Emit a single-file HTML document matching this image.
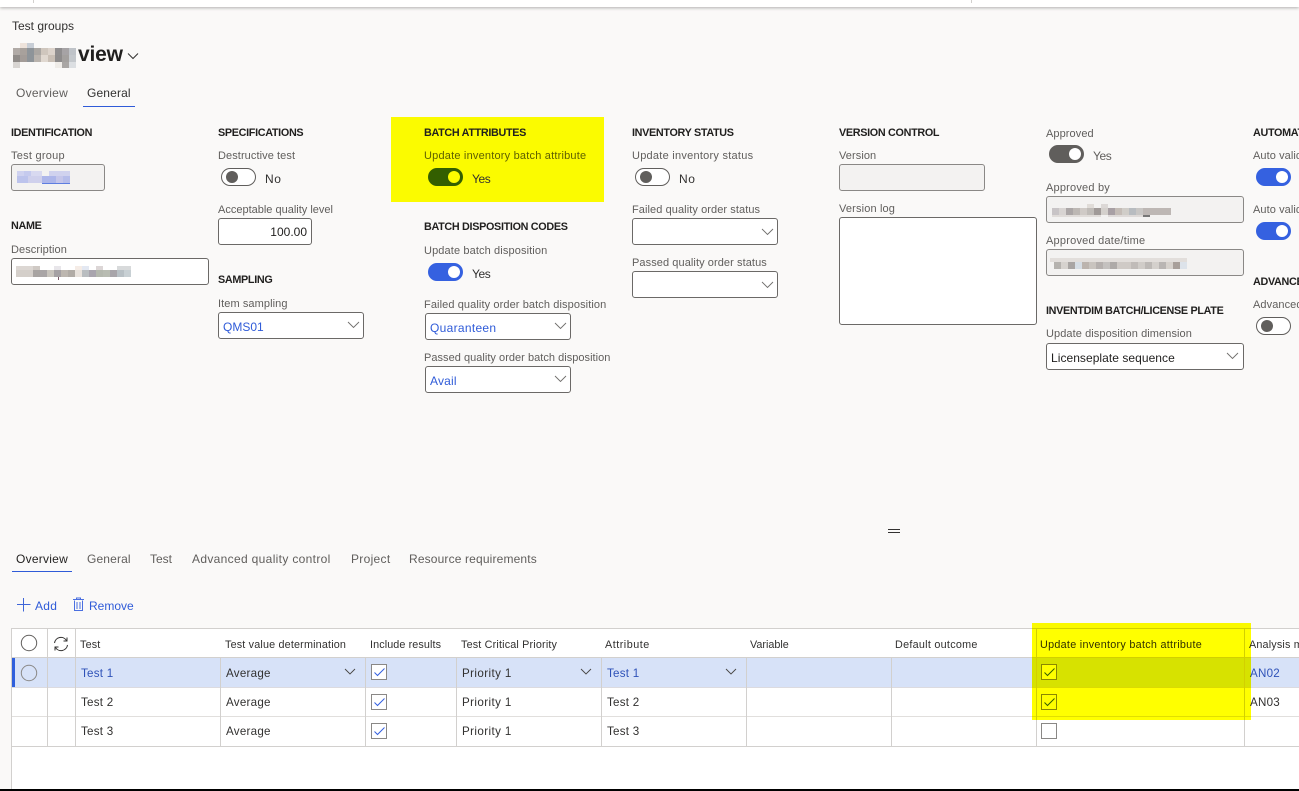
<!DOCTYPE html>
<html><head><meta charset="utf-8"><title>Test groups</title>
<style>
html,body{margin:0;padding:0;background:#faf9f8}
#p{position:relative;width:1299px;height:791px;overflow:hidden;background:#faf9f8;font-family:"Liberation Sans",sans-serif;font-size:12px;color:#323130}
#p div,#p svg{position:absolute}
.t{white-space:nowrap;line-height:16px;height:16px}
.h{font-weight:bold;font-size:10.8px;color:#201f1e;letter-spacing:-.32px;margin-top:1px}
.l{color:#605e5c;font-size:11px;letter-spacing:.08px;margin-top:1px}
.v{font-size:12px;color:#323130}
.b{color:#2f5bd8}
.f{box-sizing:border-box;background:#fff;border:1px solid #6b6967;border-radius:3px}
.g{background:#f3f2f1;border-color:#8a8886}
.tg{box-sizing:border-box;width:35px;height:18px;border-radius:9px;background:#fff;border:1px solid #605e5c}
.tg i{position:absolute;display:block;width:12px;height:12px;border-radius:50%;background:#605e5c;left:4px;top:2px}
.on{background:#3561e0;border-color:#3561e0}
.on i{background:#fff;left:19px}
.ln{background:#d2d0ce}
.cb{box-sizing:border-box;width:16px;height:16px;border:1px solid #8a8886;background:#fff}
.th{font-size:10.8px;color:#323130;letter-spacing:.17px;margin-top:1px}
.td{font-size:11.6px;color:#323130;letter-spacing:.25px}
</style></head><body><div id="p">

<!-- top bar -->
<div style="left:0;top:0;width:1299px;height:7px;background:#fff;box-shadow:0 1px 3px rgba(0,0,0,.3)"></div>
<div style="left:33px;top:0;width:1px;height:3px;background:#d2d0ce"></div>
<div style="left:971px;top:0;width:1px;height:3px;background:#d2d0ce"></div>

<div class="t" style="left:12px;top:18px;font-size:12px;color:#323130">Test groups</div>
<!-- pixelated title -->
<svg style="left:13px;top:43px" width="63" height="25" viewBox="0 0 63 25" shape-rendering="crispEdges">
<rect x="7" y="0" width="7" height="5" fill="#eee3db"/><rect x="14" y="0" width="7" height="5" fill="#c8ced6"/>
<rect x="0" y="5" width="7" height="7" fill="#b0aaa6"/><rect x="7" y="5" width="7" height="7" fill="#a8a19c"/><rect x="14" y="5" width="7" height="7" fill="#8e9499"/><rect x="21" y="5" width="7" height="7" fill="#aaa6a2"/><rect x="28" y="5" width="7" height="7" fill="#cfc6bd"/><rect x="35" y="5" width="7" height="7" fill="#dcd3cb"/><rect x="42" y="5" width="7" height="7" fill="#8f8d8e"/><rect x="49" y="5" width="7" height="7" fill="#a6a3a5"/><rect x="56" y="5" width="7" height="7" fill="#bfc3c8"/>
<rect x="0" y="12" width="7" height="7" fill="#8f8b88"/><rect x="7" y="12" width="7" height="7" fill="#a39c98"/><rect x="14" y="12" width="7" height="7" fill="#8e9499"/><rect x="21" y="12" width="7" height="7" fill="#b9b3ad"/><rect x="28" y="12" width="7" height="7" fill="#e0d8d0"/><rect x="35" y="12" width="7" height="7" fill="#c9bfb5"/><rect x="42" y="12" width="7" height="7" fill="#8e8c8c"/><rect x="49" y="12" width="7" height="7" fill="#a3a09e"/><rect x="56" y="12" width="7" height="7" fill="#c4c8cc"/>
<rect x="0" y="19" width="7" height="6" fill="#d8d5d2"/><rect x="42" y="19" width="7" height="6" fill="#efece8"/><rect x="49" y="19" width="7" height="6" fill="#a9a6a4"/><rect x="56" y="19" width="7" height="6" fill="#dcdfe2"/>
</svg>
<div class="t" style="left:78px;top:42px;height:26px;line-height:26px;font-size:21px;font-weight:bold;color:#201f1e;letter-spacing:-.2px">view</div>
<svg style="left:127px;top:52px" width="12" height="8" viewBox="0 0 12 8"><path d="M1 1.500 6 6.500 11 1.500" fill="none" stroke="#323130" stroke-width="1"/></svg>

<!-- top tabs -->
<div class="t" style="left:16px;top:85px;color:#605e5c;font-size:12px;letter-spacing:.25px">Overview</div>
<div class="t" style="left:87px;top:85px;color:#323130;font-size:12px;letter-spacing:.15px">General</div>
<div style="left:83px;top:106px;width:52px;height:1px;background:#2f5bd8"></div>

<!-- yellow highlight -->
<div style="left:391px;top:117px;width:213px;height:85px;background:#fbfb00"></div>

<!-- Identification -->
<div class="t h" style="left:11px;top:124px">IDENTIFICATION</div>
<div class="t l" style="left:11px;top:147px;letter-spacing:.25px">Test group</div>
<div class="f g" style="left:11px;top:164px;width:94px;height:27px"></div>
<svg style="left:17px;top:171px" width="54" height="13" viewBox="0 0 54 13" shape-rendering="crispEdges">
<rect x="0" y="0" width="7" height="5" fill="#cfd2f0"/><rect x="7" y="0" width="7" height="5" fill="#c5caee"/><rect x="14" y="0" width="11" height="5" fill="#d8d9f0"/><rect x="32" y="0" width="21" height="5" fill="#d0d2ee"/>
<rect x="0" y="5" width="11" height="7" fill="#bcc3ec"/><rect x="11" y="5" width="14" height="7" fill="#cfd0ec"/><rect x="25" y="5" width="14" height="7" fill="#adb6ea"/><rect x="39" y="5" width="7" height="7" fill="#c5c6ea"/><rect x="46" y="5" width="7" height="7" fill="#b6bdea"/>
<rect x="25" y="12" width="28" height="1" fill="#5e7ee0"/>
</svg>

<div class="t h" style="left:11px;top:217px">NAME</div>
<div class="t l" style="left:11px;top:241px">Description</div>
<div class="f" style="left:11px;top:258px;width:198px;height:27px"></div>
<svg style="left:16px;top:266px" width="116" height="14" viewBox="0 0 116 14" shape-rendering="crispEdges">
<rect x="0" y="0" width="17" height="4" fill="#dcd7d3"/><rect x="17" y="0" width="7" height="4" fill="#cfc9c4"/><rect x="38" y="0" width="7" height="4" fill="#e8e6ea"/><rect x="59" y="0" width="7" height="4" fill="#f5ece6"/><rect x="66" y="0" width="7" height="4" fill="#e3e8f2"/><rect x="80" y="0" width="7" height="4" fill="#dcd6d6"/><rect x="101" y="0" width="14" height="4" fill="#d8dadb"/>
<rect x="0" y="4" width="17" height="7" fill="#d4cfca"/><rect x="17" y="4" width="7" height="7" fill="#a8a4a2"/><rect x="24" y="4" width="7" height="7" fill="#a9a5a6"/><rect x="31" y="4" width="7" height="7" fill="#c8c4bd"/><rect x="38" y="4" width="7" height="7" fill="#a5a1a4"/><rect x="45" y="4" width="7" height="7" fill="#bdb7b0"/><rect x="52" y="4" width="7" height="7" fill="#b1aca6"/><rect x="59" y="4" width="7" height="7" fill="#e8e2dc"/><rect x="66" y="4" width="7" height="7" fill="#b9bdc0"/><rect x="73" y="4" width="7" height="7" fill="#a9a5ae"/><rect x="80" y="4" width="7" height="7" fill="#b4b8ae"/><rect x="87" y="4" width="7" height="7" fill="#b8bcb2"/><rect x="94" y="4" width="7" height="7" fill="#a8a5aa"/><rect x="101" y="4" width="7" height="7" fill="#b8c0c5"/><rect x="108" y="4" width="7" height="7" fill="#c8d0d4"/>
<rect x="42" y="11" width="1" height="3" fill="#7a5a6a"/>
</svg>

<!-- Specifications -->
<div class="t h" style="left:218px;top:124px">SPECIFICATIONS</div>
<div class="t l" style="left:218px;top:147px">Destructive test</div>
<div class="tg" style="left:221px;top:168px"><i></i></div>
<div class="t v" style="left:265px;top:171px;letter-spacing:.6px">No</div>
<div class="t l" style="left:218px;top:201px;letter-spacing:0">Acceptable quality level</div>
<div class="f" style="left:218px;top:218px;width:94px;height:27px"></div>
<div class="t v" style="left:218px;top:224px;width:89px;text-align:right;color:#201f1e">100.00</div>
<div class="t h" style="left:218px;top:271px">SAMPLING</div>
<div class="t l" style="left:218px;top:295px">Item sampling</div>
<div class="f" style="left:218px;top:312px;width:146px;height:27px"></div>
<div class="t v b" style="left:223px;top:319px">QMS01</div>
<svg style="left:347px;top:321px" width="13" height="8" viewBox="0 0 13 8"><path d="M1 1 6.500 6.500 12 1" fill="none" stroke="#706e6c" stroke-width=".9"/></svg>

<!-- Batch -->
<div class="t h" style="left:424px;top:124px">BATCH ATTRIBUTES</div>
<div class="t l" style="left:424px;top:147px;color:#5f6000;letter-spacing:.2px">Update inventory batch attribute</div>
<div class="tg" style="left:428px;top:168px;background:#335f00;border-color:#335f00"><i style="background:#fbfb00;left:19px"></i></div>
<div class="t v" style="left:472px;top:171px;letter-spacing:-.4px">Yes</div>
<div class="t h" style="left:424px;top:218px">BATCH DISPOSITION CODES</div>
<div class="t l" style="left:424px;top:242px;letter-spacing:.12px">Update batch disposition</div>
<div class="tg on" style="left:428px;top:263px"><i></i></div>
<div class="t v" style="left:472px;top:266px;letter-spacing:-.4px">Yes</div>
<div class="t l" style="left:424px;top:296px;letter-spacing:.1px">Failed quality order batch disposition</div>
<div class="f" style="left:425px;top:313px;width:146px;height:27px"></div>
<div class="t v b" style="left:430px;top:320px;letter-spacing:.3px">Quaranteen</div>
<svg style="left:554px;top:322px" width="13" height="8" viewBox="0 0 13 8"><path d="M1 1 6.500 6.500 12 1" fill="none" stroke="#706e6c" stroke-width=".9"/></svg>
<div class="t l" style="left:424px;top:349px;letter-spacing:.03px">Passed quality order batch disposition</div>
<div class="f" style="left:425px;top:366px;width:146px;height:27px"></div>
<div class="t v b" style="left:430px;top:373px;letter-spacing:.2px">Avail</div>
<svg style="left:554px;top:375px" width="13" height="8" viewBox="0 0 13 8"><path d="M1 1 6.500 6.500 12 1" fill="none" stroke="#706e6c" stroke-width=".9"/></svg>

<!-- Inventory -->
<div class="t h" style="left:632px;top:124px">INVENTORY STATUS</div>
<div class="t l" style="left:632px;top:147px;letter-spacing:.25px">Update inventory status</div>
<div class="tg" style="left:635px;top:168px"><i></i></div>
<div class="t v" style="left:679px;top:171px;letter-spacing:.6px">No</div>
<div class="t l" style="left:632px;top:201px">Failed quality order status</div>
<div class="f" style="left:632px;top:218px;width:146px;height:27px"></div>
<svg style="left:761px;top:228px" width="13" height="8" viewBox="0 0 13 8"><path d="M1 1 6.500 6.500 12 1" fill="none" stroke="#706e6c" stroke-width=".9"/></svg>
<div class="t l" style="left:632px;top:254px">Passed quality order status</div>
<div class="f" style="left:632px;top:271px;width:146px;height:27px"></div>
<svg style="left:761px;top:281px" width="13" height="8" viewBox="0 0 13 8"><path d="M1 1 6.500 6.500 12 1" fill="none" stroke="#706e6c" stroke-width=".9"/></svg>

<!-- Version -->
<div class="t h" style="left:839px;top:124px">VERSION CONTROL</div>
<div class="t l" style="left:839px;top:147px">Version</div>
<div class="f g" style="left:839px;top:164px;width:146px;height:27px"></div>
<div class="t l" style="left:839px;top:200px;letter-spacing:.15px">Version log</div>
<div class="f" style="left:839px;top:217px;width:198px;height:108px"></div>

<!-- Approved -->
<div class="t l" style="left:1046px;top:125px">Approved</div>
<div class="tg on" style="left:1049px;top:145px;background:#605e5c;border-color:#605e5c"><i></i></div>
<div class="t v" style="left:1093px;top:148px;color:#605e5c;letter-spacing:-.4px">Yes</div>
<div class="t l" style="left:1046px;top:179px;letter-spacing:.2px">Approved by</div>
<div class="f g" style="left:1046px;top:196px;width:198px;height:27px"></div>
<svg style="left:1052px;top:202px" width="120" height="16" viewBox="0 0 120 16" shape-rendering="crispEdges">
<rect x="35" y="2" width="7" height="4" fill="#e0dcd8"/><rect x="49" y="2" width="7" height="4" fill="#dcd8d6"/>
<rect x="0" y="6" width="7" height="7" fill="#c8c4c6"/><rect x="7" y="6" width="7" height="7" fill="#d8d4d2"/><rect x="14" y="6" width="7" height="7" fill="#aba6a6"/><rect x="21" y="6" width="7" height="7" fill="#bdb8b4"/><rect x="28" y="6" width="7" height="7" fill="#cfcac6"/><rect x="35" y="6" width="7" height="7" fill="#c0bcb8"/><rect x="42" y="6" width="7" height="7" fill="#a09a98"/><rect x="49" y="6" width="7" height="7" fill="#d4d0cc"/><rect x="56" y="6" width="7" height="7" fill="#a8a0a4"/><rect x="63" y="6" width="7" height="7" fill="#c4bcb6"/><rect x="70" y="6" width="7" height="7" fill="#d0cdc8"/><rect x="77" y="6" width="7" height="7" fill="#b8bcc0"/><rect x="84" y="6" width="7" height="7" fill="#c8c6c4"/><rect x="91" y="6" width="28" height="7" fill="#bdb7b4"/>
<rect x="0" y="13" width="49" height="2" fill="#e0dcd9"/><rect x="56" y="13" width="35" height="2" fill="#dedad8"/>
<rect x="91" y="13" width="7" height="2" fill="#777"/>
</svg>
<div class="t l" style="left:1046px;top:232px;letter-spacing:.22px">Approved date/time</div>
<div class="f g" style="left:1046px;top:249px;width:198px;height:27px"></div>
<svg style="left:1050px;top:258px" width="138" height="11" viewBox="0 0 138 11" shape-rendering="crispEdges">
<rect x="0" y="0" width="137" height="4" fill="#e2dedb"/>
<rect x="4" y="4" width="7" height="7" fill="#b5b2ae"/><rect x="11" y="4" width="7" height="7" fill="#d6d2ce"/><rect x="18" y="4" width="7" height="7" fill="#a9a5a3"/><rect x="25" y="4" width="7" height="7" fill="#d6dde4"/><rect x="32" y="4" width="7" height="7" fill="#bcb4ae"/><rect x="39" y="4" width="7" height="7" fill="#c9c4bf"/><rect x="46" y="4" width="7" height="7" fill="#b5b0ae"/><rect x="53" y="4" width="7" height="7" fill="#c4c1bf"/><rect x="60" y="4" width="7" height="7" fill="#aeaaa8"/><rect x="67" y="4" width="14" height="7" fill="#cfcac6"/><rect x="81" y="4" width="7" height="7" fill="#c0bbb8"/><rect x="88" y="4" width="7" height="7" fill="#d0ccc8"/><rect x="95" y="4" width="7" height="7" fill="#bdb9b6"/><rect x="102" y="4" width="7" height="7" fill="#d4d0cc"/><rect x="109" y="4" width="7" height="7" fill="#b9b5b3"/><rect x="116" y="4" width="7" height="7" fill="#d6d1cc"/><rect x="123" y="4" width="7" height="7" fill="#a89f9a"/><rect x="130" y="4" width="7" height="7" fill="#dde3ea"/>
</svg>
<div class="t h" style="left:1046px;top:302px">INVENTDIM BATCH/LICENSE PLATE</div>
<div class="t l" style="left:1046px;top:325px">Update disposition dimension</div>
<div class="f" style="left:1046px;top:343px;width:198px;height:27px"></div>
<div class="t v" style="left:1051px;top:350px;color:#201f1e;letter-spacing:.05px">Licenseplate sequence</div>
<svg style="left:1226px;top:352px" width="13" height="8" viewBox="0 0 13 8"><path d="M1 1 6.500 6.500 12 1" fill="none" stroke="#706e6c" stroke-width=".9"/></svg>

<!-- Automation -->
<div class="t h" style="left:1253px;top:124px">AUTOMATION</div>
<div class="t l" style="left:1253px;top:147px">Auto validate</div>
<div class="tg on" style="left:1256px;top:168px"><i></i></div>
<div class="t l" style="left:1253px;top:201px">Auto validate</div>
<div class="tg on" style="left:1256px;top:222px"><i></i></div>
<div class="t h" style="left:1253px;top:273px">ADVANCED</div>
<div class="t l" style="left:1253px;top:296px">Advanced</div>
<div class="tg" style="left:1256px;top:317px"><i></i></div>

<!-- splitter -->
<div style="left:888px;top:529px;width:12px;height:1px;background:#323130"></div>
<div style="left:888px;top:532px;width:12px;height:1px;background:#323130"></div>

<!-- bottom tabs -->
<div class="t" style="left:16px;top:551px;color:#201f1e;letter-spacing:.25px">Overview</div>
<div class="t" style="left:87px;top:551px;color:#605e5c;letter-spacing:.15px">General</div>
<div class="t" style="left:150px;top:551px;color:#605e5c">Test</div>
<div class="t" style="left:192px;top:551px;color:#605e5c;letter-spacing:.33px">Advanced quality control</div>
<div class="t" style="left:351px;top:551px;color:#605e5c;letter-spacing:.3px">Project</div>
<div class="t" style="left:409px;top:551px;color:#605e5c;letter-spacing:.15px">Resource requirements</div>
<div style="left:12px;top:571px;width:60px;height:1px;background:#2f5bd8"></div>

<!-- actions -->
<svg style="left:17px;top:598px" width="14" height="14" viewBox="0 0 14 14"><path d="M0 6.500H13.500M6.500 0V13.500" stroke="#3f66d8" fill="none"/></svg>
<div class="t b" style="left:35px;top:598px;letter-spacing:.3px">Add</div>
<svg style="left:72px;top:597px" width="13" height="15" viewBox="0 0 13 15"><path d="M2.500 3.500V13.500H10.500V3.500M1 2.500H12M4.500 2.500V1H8.500V2.500M5 5V12M8 5V12" fill="none" stroke="#4a6fe0"/></svg>
<div class="t b" style="left:89px;top:598px">Remove</div>

<!-- grid -->
<div style="left:11px;top:628px;width:1288px;height:161px;background:#fff"></div>
<div style="left:12px;top:658px;width:1287px;height:30px;background:#d7e2f8"></div>
<div style="left:12px;top:658px;width:3px;height:30px;background:#2f5fdc"></div>
<div class="ln" style="left:11px;top:628px;width:1288px;height:1px"></div>
<div class="ln" style="left:11px;top:657px;width:1288px;height:1px"></div>
<div class="ln" style="left:11px;top:687px;width:1288px;height:1px;background:#dcdbe0"></div>
<div class="ln" style="left:11px;top:716px;width:1288px;height:1px;background:#e1dfdd"></div>
<div class="ln" style="left:11px;top:746px;width:1288px;height:1px"></div>
<div class="ln" style="left:11px;top:628px;width:1px;height:161px"></div>
<div class="ln" style="left:47px;top:628px;width:1px;height:119px"></div>
<div class="ln" style="left:75px;top:628px;width:1px;height:119px"></div>
<div class="ln" style="left:220px;top:658px;width:1px;height:89px"></div>
<div class="ln" style="left:365px;top:658px;width:1px;height:89px"></div>
<div class="ln" style="left:456px;top:658px;width:1px;height:89px"></div>
<div class="ln" style="left:601px;top:658px;width:1px;height:89px"></div>
<div class="ln" style="left:746px;top:658px;width:1px;height:89px"></div>
<div class="ln" style="left:891px;top:658px;width:1px;height:89px"></div>
<div class="ln" style="left:1036px;top:628px;width:1px;height:119px"></div>
<div class="ln" style="left:1244px;top:628px;width:1px;height:119px"></div>

<svg style="left:20px;top:634px" width="18" height="48" viewBox="0 0 18 48"><circle cx="9" cy="9" r="7.700" fill="#fff" stroke="#605e5c"/><circle cx="9" cy="39" r="7.700" fill="none" stroke="#8a8886"/></svg>
<svg style="left:53px;top:636px" width="16" height="16" viewBox="0 0 16 16"><path d="M1.500 7A6.500 6.500 0 0 1 13.500 4.500M14.500 9A6.500 6.500 0 0 1 2.500 11.500M14 1.500V5H10.500M2 14.500V11H5.500" fill="none" stroke="#323130"/></svg>

<div class="t th" style="left:80px;top:636px">Test</div>
<div class="t th" style="left:225px;top:636px">Test value determination</div>
<div class="t th" style="left:370px;top:636px;letter-spacing:.1px">Include results</div>
<div class="t th" style="left:461px;top:636px">Test Critical Priority</div>
<div class="t th" style="left:605px;top:636px;letter-spacing:.5px">Attribute</div>
<div class="t th" style="left:750px;top:636px;letter-spacing:0">Variable</div>
<div class="t th" style="left:895px;top:636px;letter-spacing:.27px">Default outcome</div>
<div class="t th" style="left:1040px;top:636px;letter-spacing:.28px">Update inventory batch attribute</div>
<div class="t th" style="left:1249px;top:636px">Analysis method</div>

<div class="t td" style="left:81px;top:666px;color:#2f52b8">Test 1</div>
<div class="t td" style="left:81px;top:695px">Test 2</div>
<div class="t td" style="left:81px;top:724px">Test 3</div>
<div class="t td" style="left:226px;top:666px">Average</div>
<div class="t td" style="left:226px;top:695px">Average</div>
<div class="t td" style="left:226px;top:724px">Average</div>
<div class="t td" style="left:462px;top:666px;letter-spacing:.4px">Priority 1</div>
<div class="t td" style="left:462px;top:695px;letter-spacing:.4px">Priority 1</div>
<div class="t td" style="left:462px;top:724px;letter-spacing:.4px">Priority 1</div>
<div class="t td" style="left:607px;top:666px;color:#2f52b8">Test 1</div>
<div class="t td" style="left:607px;top:695px">Test 2</div>
<div class="t td" style="left:607px;top:724px">Test 3</div>
<div class="t td" style="left:1250px;top:666px;color:#2f52b8">AN02</div>
<div class="t td" style="left:1250px;top:695px">AN03</div>

<svg style="left:344px;top:668px" width="12" height="8" viewBox="0 0 12 8"><path d="M1 1 6 6 11 1" fill="none" stroke="#484644" stroke-width=".9"/></svg>
<svg style="left:580px;top:668px" width="12" height="8" viewBox="0 0 12 8"><path d="M1 1 6 6 11 1" fill="none" stroke="#484644" stroke-width=".9"/></svg>
<svg style="left:725px;top:668px" width="12" height="8" viewBox="0 0 12 8"><path d="M1 1 6 6 11 1" fill="none" stroke="#484644" stroke-width=".9"/></svg>

<div class="cb" style="left:371px;top:664px"><svg style="left:2px;top:3px" width="11" height="9" viewBox="0 0 11 9"><path d="M.5 4.500 3.500 7.500 10.500 .5" fill="none" stroke="#3561e0"/></svg></div>
<div class="cb" style="left:371px;top:694px"><svg style="left:2px;top:3px" width="11" height="9" viewBox="0 0 11 9"><path d="M.5 4.500 3.500 7.500 10.500 .5" fill="none" stroke="#3561e0"/></svg></div>
<div class="cb" style="left:371px;top:723px"><svg style="left:2px;top:3px" width="11" height="9" viewBox="0 0 11 9"><path d="M.5 4.500 3.500 7.500 10.500 .5" fill="none" stroke="#3561e0"/></svg></div>
<div class="cb" style="left:1041px;top:664px"><svg style="left:2px;top:3px" width="11" height="9" viewBox="0 0 11 9"><path d="M.5 4.500 3.500 7.500 10.500 .5" fill="none" stroke="#3561e0"/></svg></div>
<div class="cb" style="left:1041px;top:694px"><svg style="left:2px;top:3px" width="11" height="9" viewBox="0 0 11 9"><path d="M.5 4.500 3.500 7.500 10.500 .5" fill="none" stroke="#3561e0"/></svg></div>
<div class="cb" style="left:1041px;top:723px"></div>

<!-- yellow overlay -->
<div style="left:1032px;top:623px;width:219px;height:97px;background:#ffff00;mix-blend-mode:multiply"></div>

<!-- bottom edge -->
<div style="left:0;top:789px;width:1299px;height:2px;background:#000"></div>
</div></body></html>
